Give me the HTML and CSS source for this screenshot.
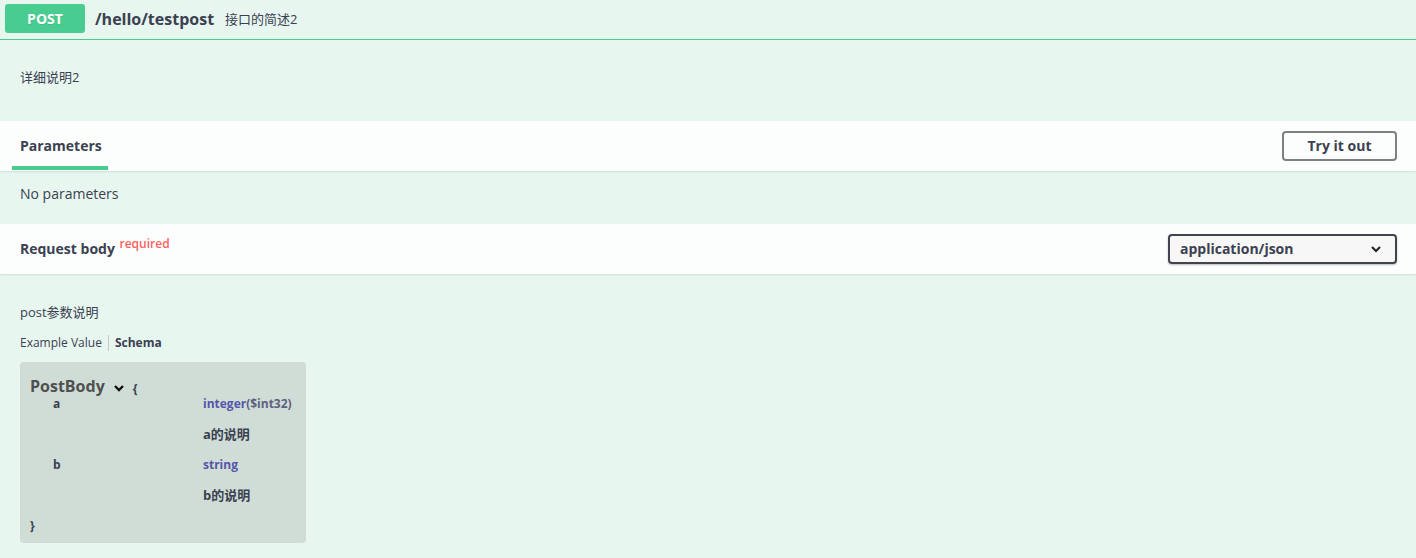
FILE: index.html
```html
<!DOCTYPE html>
<html>
<head>
    <title>Swagger - /hello/testpost</title>
    <link rel="stylesheet" href="styles.css">
</head>
<body>
    <div class="opblock">
        <div class="opblock-summary">
            <span class="method">POST</span>
            <span class="path">/hello/testpost</span>
            <span class="summary-desc">接口的简述2</span>
        </div>

        <div class="opblock-description">详细说明2</div>

        <div class="section-header">
            <div class="tab-item">Parameters</div>
            <button class="try-out">Try it out</button>
        </div>
        <div class="section-body">No parameters</div>

        <div class="section-header">
            <div class="section-title">Request body <sup class="required">required</sup></div>
            <div class="content-type">
                <span>application/json</span>
                <svg width="12" height="8" viewBox="0 0 12 8"><path d="M2 2 L6 6 L10 2" fill="none" stroke="#222" stroke-width="2"/></svg>
            </div>
        </div>

        <div class="request-body">
            <div class="body-desc">post参数说明</div>
            <div class="model-tabs">
                <span class="model-tab">Example Value</span>
                <span class="model-tab active">Schema</span>
            </div>
            <div class="model-box">
                <div class="model-title">
                    <span class="model-name">PostBody</span>
                    <svg width="12" height="8" viewBox="0 0 12 8"><path d="M2 2 L6 6 L10 2" fill="none" stroke="#111" stroke-width="2.4"/></svg>
                    <span class="brace">{</span>
                </div>
                <div class="prop">
                    <span class="prop-name">a</span>
                    <div class="prop-info">
                        <div class="prop-type-line"><span class="prop-type">integer</span><span class="prop-format">($int32)</span></div>
                        <div class="prop-desc">a的说明</div>
                    </div>
                </div>
                <div class="prop">
                    <span class="prop-name">b</span>
                    <div class="prop-info">
                        <div class="prop-type-line"><span class="prop-type">string</span></div>
                        <div class="prop-desc">b的说明</div>
                    </div>
                </div>
                <div class="brace-close">}</div>
            </div>
        </div>
    </div>
</body>
</html>
```

FILE: styles.css
```css
body {
    margin: 0;
    padding: 0;
    background-color: #e7f6ef;
    font-family: "Open Sans", "Noto Sans CJK SC", sans-serif;
    color: #3b4151;
}

.opblock {
    background-color: #e7f6ef;
    min-height: 558px;
}

.opblock-summary {
    display: flex;
    align-items: center;
    padding: 4px 5px 6px;
    border-bottom: 1px solid #49cc90;
}

.method {
    display: flex;
    align-items: center;
    justify-content: center;
    width: 80px;
    height: 29px;
    background-color: #49cc90;
    color: #fff;
    border-radius: 3px;
    font-size: 14px;
    font-weight: 700;
    text-shadow: 0 1px 0 rgba(0, 0, 0, 0.1);
}

.path {
    margin-left: 10px;
    font-size: 16px;
    font-weight: 700;
}

.summary-desc {
    margin-left: 11px;
    font-size: 13px;
}

.opblock-description {
    padding: 28px 20px 34px;
    font-size: 13px;
    line-height: 19px;
}

.section-header {
    display: flex;
    align-items: center;
    justify-content: space-between;
    height: 50px;
    padding: 0 19px 0 12px;
    background-color: rgba(255, 255, 255, 0.85);
    box-shadow: 0 1px 2px rgba(0, 0, 0, 0.1);
}

.section-header + .section-header {
    height: 49px;
}

.tab-item {
    align-self: stretch;
    display: flex;
    align-items: center;
    width: 96px;
    padding: 3px 8px 0;
    box-sizing: border-box;
    font-size: 14px;
    font-weight: 700;
    border-bottom: 4px solid #49cc90;
    margin-bottom: 1px;
}

.try-out {
    width: 115px;
    height: 30px;
    padding-bottom: 2px;
    background: transparent;
    border: 2px solid #808080;
    border-radius: 4px;
    font-family: inherit;
    font-size: 14px;
    font-weight: 700;
    color: #3b4151;
}

.section-body {
    padding: 13px 20px 0;
    height: 53px;
    box-sizing: border-box;
    font-size: 14px;
    line-height: 20px;
}

.section-title {
    padding-left: 8px;
    font-size: 14px;
    font-weight: 700;
    line-height: 20px;
}

.required {
    color: #ff5f5f;
    font-size: 12px;
    font-weight: 600;
    line-height: 0;
    vertical-align: 6px;
    margin-left: 1px;
}

.content-type {
    display: flex;
    align-items: center;
    justify-content: space-between;
    width: 229px;
    height: 30px;
    box-sizing: border-box;
    padding: 0 13px 2px 10px;
    border: 2px solid #41444e;
    border-radius: 4px;
    background-color: #f7f7f7;
    box-shadow: 0 1px 2px rgba(0, 0, 0, 0.25);
    font-size: 14px;
    font-weight: 700;
}

.content-type svg {
    margin-top: 2px;
}

.request-body {
    padding: 28px 20px 15px;
}

.body-desc {
    font-size: 13px;
    line-height: 20px;
}

.model-tabs {
    display: flex;
    align-items: center;
    margin-top: 13px;
    font-size: 12px;
    line-height: 16px;
}

.model-tab + .model-tab {
    margin-left: 6px;
    padding-left: 6px;
    border-left: 1px solid #c7c7c7;
}

.model-tab.active {
    font-weight: 700;
}

.model-box {
    margin-top: 11px;
    width: 286px;
    box-sizing: border-box;
    padding: 14px 10px 9px;
    background-color: rgba(0, 0, 0, 0.1);
    border-radius: 4px;
    font-size: 12px;
    font-weight: 700;
}

.model-title {
    display: flex;
    align-items: center;
    height: 20px;
}

.model-name {
    font-size: 16px;
    font-weight: 700;
    color: #505050;
}

.model-title svg {
    margin: 3px 0 0 8px;
}

.brace {
    margin: 4px 0 0 8px;
    font-size: 12px;
}

.prop {
    display: flex;
    margin-bottom: 13px;
}

.prop-name {
    flex: 0 0 173px;
    box-sizing: border-box;
    padding-left: 23px;
    line-height: 16px;
}

.prop-type-line {
    line-height: 16px;
}

.prop-type {
    color: #55a;
}

.prop-format {
    color: #606080;
}

.prop-desc {
    margin-top: 12px;
    font-size: 13px;
    line-height: 20px;
}

.brace-close {
    line-height: 16px;
}
```
